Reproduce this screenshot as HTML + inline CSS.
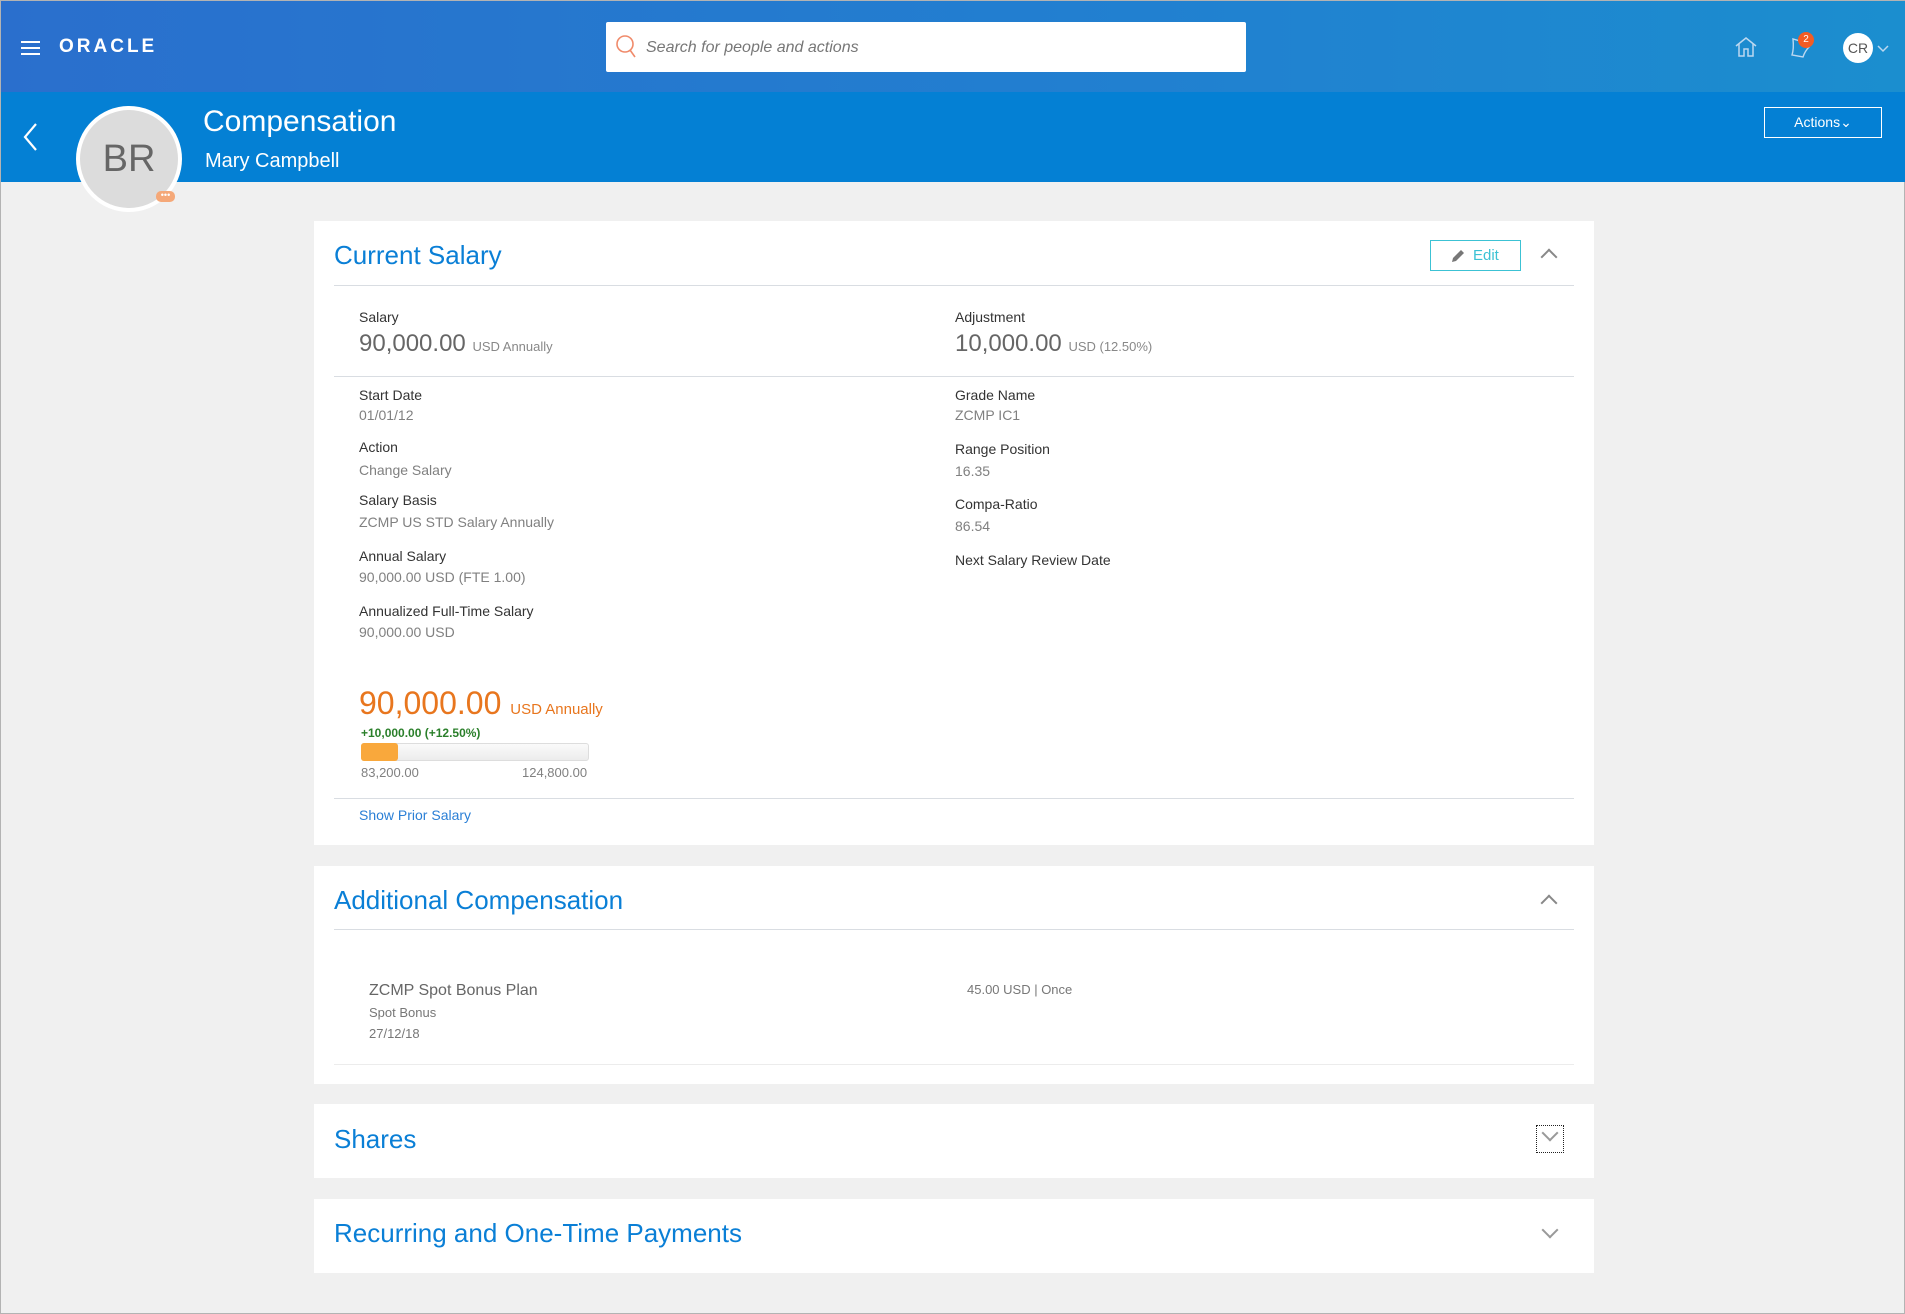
<!DOCTYPE html>
<html><head><meta charset="utf-8"><style>
*{margin:0;padding:0;box-sizing:border-box}
body{width:1905px;height:1314px;background:#f0f0f0;font-family:"Liberation Sans",sans-serif;position:relative;overflow:hidden;border:1px solid #b3b3b3}
.a{position:absolute;line-height:1;white-space:nowrap}
.top{position:absolute;left:0;top:0;width:1905px;height:91px;background:linear-gradient(90deg,#2a6fcd,#2180d0 60%,#1b8ecf)}
.hdr{position:absolute;left:0;top:91px;width:1905px;height:90px;background:#0480d4}
.card{position:absolute;left:313px;width:1280px;background:#fff}
.hl{position:absolute;left:20px;right:20px;height:1px;background:#d9dde2}
.t{color:#0a7fd6;font-size:26px}
.lb{font-size:14px;color:#333}
.vl{font-size:14px;color:#808080}
.chev{position:absolute;width:12px;height:12px;border-left:2px solid #888;border-top:2px solid #888}
</style></head><body>
<div class="top"></div>
<div class="hdr"></div>
<div class="a" style="left:20px;top:40px;width:19px;height:2px;background:#fff"></div>
<div class="a" style="left:20px;top:46px;width:19px;height:2px;background:#fff"></div>
<div class="a" style="left:20px;top:52px;width:19px;height:2px;background:#fff"></div>
<div class="a" style="left:58px;top:36px;font-size:19px;color:#fff;letter-spacing:3px;font-weight:bold">ORACLE</div>
<div class="a" style="left:605px;top:21px;width:640px;height:50px;background:#fff;border-radius:2px"></div>
<svg class="a" style="left:614px;top:33px" width="24" height="26"><circle cx="10" cy="10" r="8" fill="none" stroke="#f08a6a" stroke-width="1.6"/><line x1="15" y1="16" x2="20" y2="23" stroke="#f08a6a" stroke-width="1.6"/></svg>
<div class="a" style="left:645px;top:39px;font-size:16px;color:#777;font-style:italic">Search for people and actions</div>
<svg class="a" style="left:1733px;top:34px" width="24" height="24"><path d="M2 11 L12 3 L22 11 M5 9 V21 H10 V14 H14 V21 H19 V9" fill="none" stroke="#bcd8f0" stroke-width="1.5"/></svg>
<svg class="a" style="left:1787px;top:34px" width="24" height="24"><path d="M5 4 Q6 14 4 20 L15 22 Q17 16 21 12 L12 6 Z" fill="none" stroke="#bcd8f0" stroke-width="1.4"/></svg>
<div class="a" style="left:1797px;top:31px;width:16px;height:16px;border-radius:50%;background:#f25c24;color:#fff;font-size:10px;text-align:center;line-height:16px">2</div>
<div class="a" style="left:1842px;top:32px;width:30px;height:30px;border-radius:50%;background:#fff;color:#555;font-size:14px;text-align:center;line-height:30px">CR</div>
<svg class="a" style="left:1876px;top:44px" width="12" height="8"><path d="M1 1 L6 6 L11 1" fill="none" stroke="#bcd8f0" stroke-width="1.5"/></svg>
<svg class="a" style="left:20px;top:121px" width="20" height="30"><path d="M15 2 L4 15 L15 28" fill="none" stroke="#fff" stroke-width="2.2"/></svg>
<div class="a" style="left:75px;top:105px;width:106px;height:106px;border-radius:50%;background:#fff"></div>
<div class="a" style="left:79px;top:109px;width:98px;height:98px;border-radius:50%;background:#dcdcdc;color:#666;font-size:38px;text-align:center;line-height:98px">BR</div>
<div class="a" style="left:155px;top:190px;width:19px;height:11px;border-radius:5px;background:#f5a878;color:#fff;font-size:9px;text-align:center;line-height:8px">•••</div>
<div class="a" style="left:202px;top:106px;font-size:30px;color:#fff">Compensation</div>
<div class="a" style="left:204px;top:150px;font-size:20px;color:#fff">Mary Campbell</div>
<div class="a" style="left:1763px;top:106px;width:118px;height:31px;border:1.5px solid #fff;color:#fff;font-size:14px;text-align:center;line-height:28px">Actions&#8964;</div>

<div class="card" style="top:220px;height:624px">
  <div class="a t" style="left:20px;top:21px">Current Salary</div>
  <div class="a" style="left:1116px;top:19px;width:91px;height:31px;border:1px solid #3cc2d4;color:#3cc2d4;font-size:15px;line-height:29px;padding-left:42px">Edit</div>
  <svg class="a" style="left:1136px;top:27px" width="16" height="16"><path d="M2 14 L3 10 L11 2 L14 5 L6 13 Z" fill="#777"/></svg>
  <div class="chev" style="left:1229px;top:30px;transform:rotate(45deg)"></div>
  <div class="hl" style="top:64px"></div>
  <div class="a lb" style="left:45px;top:89px">Salary</div>
  <div class="a" style="left:45px;top:111px;font-size:24px;color:#666">90,000.00 <span style="font-size:13px;color:#888">USD Annually</span></div>
  <div class="a lb" style="left:641px;top:89px">Adjustment</div>
  <div class="a" style="left:641px;top:111px;font-size:24px;color:#666">10,000.00 <span style="font-size:13px;color:#888">USD (12.50%)</span></div>
  <div class="hl" style="top:155px"></div>
  <div class="a lb" style="left:45px;top:167px">Start Date</div>
  <div class="a vl" style="left:45px;top:187px">01/01/12</div>
  <div class="a lb" style="left:45px;top:219px">Action</div>
  <div class="a vl" style="left:45px;top:242px">Change Salary</div>
  <div class="a lb" style="left:45px;top:272px">Salary Basis</div>
  <div class="a vl" style="left:45px;top:294px">ZCMP US STD Salary Annually</div>
  <div class="a lb" style="left:45px;top:328px">Annual Salary</div>
  <div class="a vl" style="left:45px;top:349px">90,000.00 USD (FTE 1.00)</div>
  <div class="a lb" style="left:45px;top:383px">Annualized Full-Time Salary</div>
  <div class="a vl" style="left:45px;top:404px">90,000.00 USD</div>
  <div class="a lb" style="left:641px;top:167px">Grade Name</div>
  <div class="a vl" style="left:641px;top:187px">ZCMP IC1</div>
  <div class="a lb" style="left:641px;top:221px">Range Position</div>
  <div class="a vl" style="left:641px;top:243px">16.35</div>
  <div class="a lb" style="left:641px;top:276px">Compa-Ratio</div>
  <div class="a vl" style="left:641px;top:298px">86.54</div>
  <div class="a lb" style="left:641px;top:332px">Next Salary Review Date</div>
  <div class="a" style="left:45px;top:466px;font-size:32px;color:#e8761e">90,000.00 <span style="font-size:15px">USD Annually</span></div>
  <div class="a" style="left:47px;top:506px;font-size:12px;color:#2a7f2a;font-weight:bold">+10,000.00 (+12.50%)</div>
  <div class="a" style="left:47px;top:522px;width:228px;height:18px;border:1px solid #ddd;border-radius:3px;background:linear-gradient(#fafafa,#ececec)"></div>
  <div class="a" style="left:47px;top:522px;width:37px;height:18px;border-radius:3px;background:#f9a83c"></div>
  <div class="a vl" style="left:47px;top:545px;font-size:13px">83,200.00</div>
  <div class="a vl" style="left:208px;top:545px;font-size:13px">124,800.00</div>
  <div class="hl" style="top:577px"></div>
  <div class="a" style="left:45px;top:587px;font-size:14px;color:#2a7fd6">Show Prior Salary</div>
</div>

<div class="card" style="top:865px;height:218px">
  <div class="a t" style="left:20px;top:21px">Additional Compensation</div>
  <div class="chev" style="left:1229px;top:31px;transform:rotate(45deg)"></div>
  <div class="hl" style="top:63px"></div>
  <div class="a" style="left:55px;top:117px;font-size:16px;color:#666">ZCMP Spot Bonus Plan</div>
  <div class="a vl" style="left:55px;top:140px;font-size:13px;color:#777">Spot Bonus</div>
  <div class="a vl" style="left:55px;top:161px;font-size:13px;color:#777">27/12/18</div>
  <div class="a vl" style="left:653px;top:117px;font-size:13px;color:#777">45.00 USD | Once</div>
  <div class="hl" style="top:198px;background:#ececec"></div>
</div>

<div class="card" style="top:1103px;height:74px">
  <div class="a t" style="left:20px;top:22px">Shares</div>
  <div class="a" style="left:1222px;top:21px;width:28px;height:28px;border:1px dotted #222"></div>
  <div class="chev" style="left:1230px;top:23px;transform:rotate(-135deg);border-color:#999"></div>
</div>

<div class="card" style="top:1198px;height:74px">
  <div class="a t" style="left:20px;top:21px">Recurring and One-Time Payments</div>
  <div class="chev" style="left:1230px;top:25px;transform:rotate(-135deg);border-color:#999"></div>
</div>
</body></html>
